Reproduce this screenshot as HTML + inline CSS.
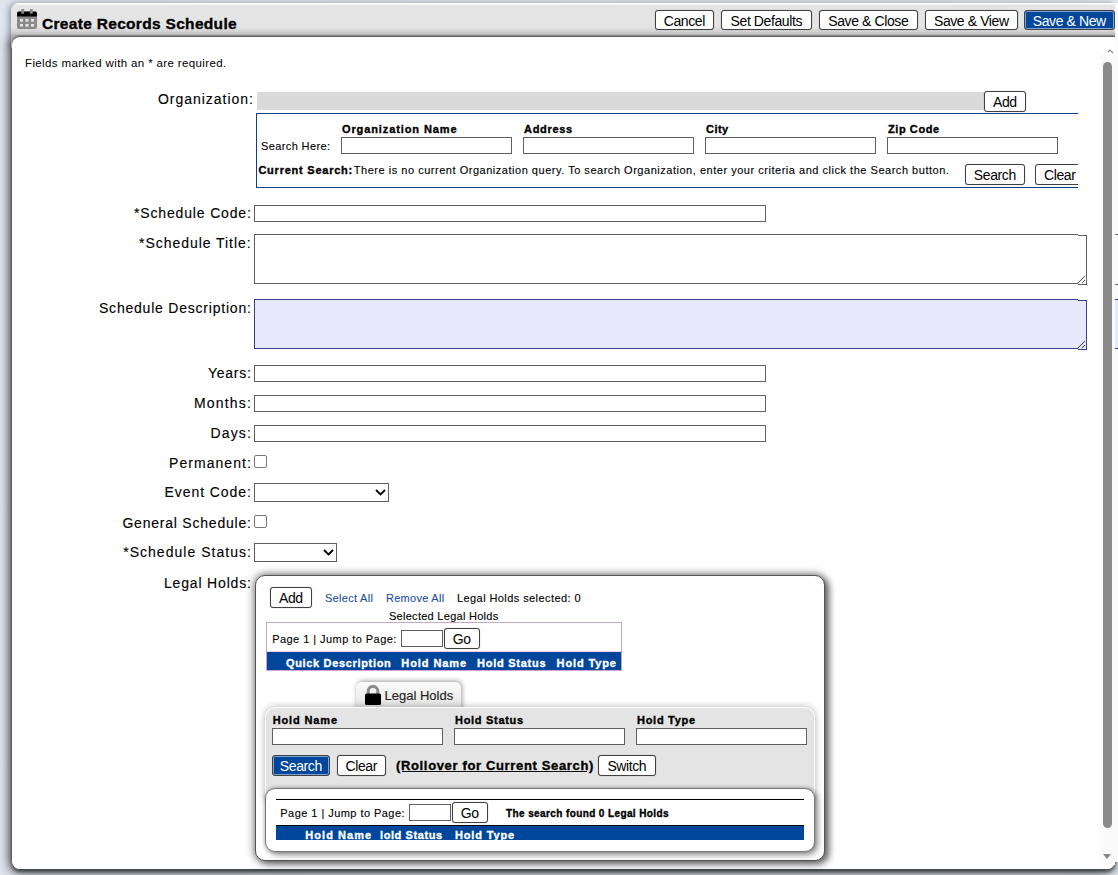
<!DOCTYPE html>
<html><head><meta charset="utf-8"><style>
html,body{margin:0;padding:0;width:1118px;height:875px;overflow:hidden}
body{background:linear-gradient(90deg,#dfe6ee,#e6ebf1);position:relative;font-family:"Liberation Sans",sans-serif}
.b{position:absolute}
.t{position:absolute;white-space:nowrap;line-height:normal;-webkit-text-stroke:0.12px currentColor;font-family:"Liberation Sans",sans-serif}
.btn{position:absolute;box-sizing:border-box;border:1px solid #404040;border-radius:3px;box-shadow:0 0 1px rgba(0,0,0,.45);letter-spacing:-0.4px;text-indent:-0.4px;text-align:center;font-family:"Liberation Sans",sans-serif;white-space:nowrap}
</style></head><body>
<div class="b" style="left:12px;top:36px;width:1103px;height:833px;z-index:-2;border-radius:8px 0 8px 8px;background:#fff;box-shadow:-1px 2px 11px 1px rgba(25,28,30,.95),0 3px 3px rgba(20,20,20,.4)"></div>
<div class="b" style="left:11px;top:3px;width:1104px;height:45px;z-index:-1;border-radius:8px 0 0 0;background:linear-gradient(#fff 0,#fff 1px,#e4e4e4 2px,#e4e4e4 24px,#d0d0d0 29px,#adadad 33px,#a8a8a8 45px);box-shadow:-2px 0 6px rgba(40,45,55,.45)"></div>
<svg class="b" style="left:17px;top:9px" width="20" height="20" viewBox="0 0 20 20">
<rect x="0" y="2.5" width="20" height="17.5" rx="2" fill="#8a8a8a"/>
<path d="M2 2.5h16a2 2 0 0 1 2 2V7.5H0V4.5a2 2 0 0 1 2-2z" fill="#000"/>
<rect x="4.3" y="0" width="2.8" height="4.7" fill="#8a8a8a"/><rect x="12.9" y="0" width="2.8" height="4.7" fill="#8a8a8a"/>
<g fill="#e6e6e6"><rect x="3" y="10" width="3" height="2.6"/><rect x="8.5" y="10" width="3" height="2.6"/><rect x="14" y="10" width="3" height="2.6"/>
<rect x="3" y="15" width="3" height="2.6"/><rect x="8.5" y="15" width="3" height="2.6"/><rect x="14" y="15" width="3" height="2.6"/></g>
</svg>
<div class="btn" style="left:655px;top:10px;width:59px;height:20px;background:#fff;color:#000;font-size:14px;line-height:18px;padding-top:1px">Cancel</div>
<div class="btn" style="left:721px;top:10px;width:91px;height:20px;background:#fff;color:#000;font-size:14px;line-height:18px;padding-top:1px">Set Defaults</div>
<div class="btn" style="left:819px;top:10px;width:99px;height:20px;background:#fff;color:#000;font-size:14px;line-height:18px;padding-top:1px">Save &amp; Close</div>
<div class="btn" style="left:925px;top:10px;width:93px;height:20px;background:#fff;color:#000;font-size:14px;line-height:18px;padding-top:1px">Save &amp; View</div>
<div class="btn" style="left:1024px;top:10px;width:91px;height:20px;background:#00479b;box-shadow:inset 0 0 0 1px #7fa6d2;color:#fff;font-size:14px;line-height:18px;padding-top:1px">Save &amp; New</div>
<div class="b" style="left:12px;top:36px;width:1103px;height:833px;background:#fff;border-radius:8px 0 8px 8px;border-top:1px solid #606060;box-sizing:border-box;box-shadow:0 -1px 1px rgba(0,0,0,.25)"></div>
<div class="b" style="left:257px;top:92px;width:727px;height:18px;background:#dadada"></div>
<div class="btn" style="left:984px;top:91px;width:42px;height:21px;background:#fff;color:#000;font-size:14px;line-height:19px;padding-top:1px">Add</div>
<div class="b" style="left:256px;top:113px;width:822px;height:75px;border:1px solid #0a3f8f;border-right:none;box-sizing:border-box"></div>
<div class="b" style="left:341px;top:137px;width:171px;height:17px;box-sizing:border-box;border:1px solid #5f5f5f;background:#fff"></div>
<div class="b" style="left:523px;top:137px;width:171px;height:17px;box-sizing:border-box;border:1px solid #5f5f5f;background:#fff"></div>
<div class="b" style="left:705px;top:137px;width:171px;height:17px;box-sizing:border-box;border:1px solid #5f5f5f;background:#fff"></div>
<div class="b" style="left:887px;top:137px;width:171px;height:17px;box-sizing:border-box;border:1px solid #5f5f5f;background:#fff"></div>
<div class="btn" style="left:965px;top:164px;width:60px;height:21px;background:#fff;color:#000;font-size:14px;line-height:19px;padding-top:1px">Search</div>
<div class="b" style="left:1035px;top:164px;width:43px;height:21px;overflow:hidden"><div class="btn" style="left:0px;top:0px;width:50px;height:21px;background:#fff;color:#000;font-size:14px;line-height:19px;padding-top:1px">Clear</div></div>
<div class="b" style="left:254px;top:205px;width:512px;height:17px;box-sizing:border-box;border:1px solid #5f5f5f;background:#fff"></div>
<div class="b" style="left:254px;top:234px;width:824px;height:50px;box-sizing:border-box;border:1px solid #5f5f5f;border-right:none;background:#fff"></div><div class="b" style="left:1078px;top:235px;width:9px;height:50px;box-sizing:border-box;border:1px solid #5f5f5f;border-left:none;background:#fff"></div><svg class="b" style="left:1077px;top:275px" width="9" height="9" viewBox="0 0 9 9"><path d="M1 8L8 1M5 8L8 5" stroke="#555" stroke-width="1.1" stroke-dasharray="1.1 0.4" fill="none"/></svg>
<div class="b" style="left:254px;top:299px;width:824px;height:50px;box-sizing:border-box;border:1px solid #3a3f8a;border-right:none;background:#e8e8fd"></div><div class="b" style="left:1078px;top:300px;width:9px;height:50px;box-sizing:border-box;border:1px solid #3a3f8a;border-left:none;background:#e8e8fd"></div><svg class="b" style="left:1077px;top:340px" width="9" height="9" viewBox="0 0 9 9"><path d="M1 8L8 1M5 8L8 5" stroke="#444" stroke-width="1.1" stroke-dasharray="1.1 0.4" fill="none"/></svg>
<div class="b" style="left:254px;top:365px;width:512px;height:17px;box-sizing:border-box;border:1px solid #5f5f5f;background:#fff"></div>
<div class="b" style="left:254px;top:395px;width:512px;height:17px;box-sizing:border-box;border:1px solid #5f5f5f;background:#fff"></div>
<div class="b" style="left:254px;top:425px;width:512px;height:17px;box-sizing:border-box;border:1px solid #5f5f5f;background:#fff"></div>
<div class="b" style="left:254px;top:455px;width:13px;height:13px;box-sizing:border-box;border:1px solid #777;border-radius:2px;background:#fff"></div>
<div class="b" style="left:254px;top:515px;width:13px;height:13px;box-sizing:border-box;border:1px solid #777;border-radius:2px;background:#fff"></div>
<div class="b" style="left:254px;top:483px;width:135px;height:19px;box-sizing:border-box;border:1px solid #5f5f5f;background:#fff"></div>
<div class="b" style="left:254px;top:543px;width:83px;height:19px;box-sizing:border-box;border:1px solid #5f5f5f;background:#fff"></div>
<svg class="b" style="left:375px;top:489px" width="11" height="7" viewBox="0 0 11 7"><path d="M1 1l4.5 4.5L10 1" stroke="#000" stroke-width="1.8" fill="none"/></svg>
<svg class="b" style="left:323px;top:549px" width="11" height="7" viewBox="0 0 11 7"><path d="M1 1l4.5 4.5L10 1" stroke="#000" stroke-width="1.8" fill="none"/></svg>
<div class="b" style="left:1115px;top:3px;width:3px;height:859px;background:#fbfbfb"></div>
<div class="b" style="left:1100px;top:53px;width:15px;height:812px;background:#fafafa"></div>
<div class="b" style="left:1103px;top:62px;width:9px;height:766px;background:#8a8a8a;border-radius:4.5px"></div>
<svg class="b" style="left:1106px;top:48px" width="8" height="6" viewBox="0 0 8 6"><path d="M2 4L4 2l3 3" stroke="#888" stroke-width="1.1" fill="none"/></svg>
<svg class="b" style="left:1102px;top:854px" width="10" height="6" viewBox="0 0 10 6"><path d="M1 0h8L5 5z" fill="#888"/></svg>
<div class="b" style="left:1115px;top:234px;width:3px;height:1px;background:#666"></div>
<div class="b" style="left:1115px;top:284px;width:3px;height:1px;background:#666"></div>
<div class="b" style="left:1115px;top:299px;width:3px;height:50px;background:#e8e8fd;border-top:1px solid #3a3f8a;border-bottom:1px solid #3a3f8a;box-sizing:border-box"></div>
<div class="b" style="left:255px;top:575px;width:570px;height:286px;background:#fff;border:1px solid #555;box-sizing:border-box;border-radius:10px;box-shadow:0 0 8px 1px rgba(0,0,0,.5),4px 3px 7px rgba(0,0,0,.45)"></div>
<div class="btn" style="left:270px;top:587px;width:42px;height:21px;background:#fff;color:#000;font-size:14px;line-height:19px;padding-top:1px">Add</div>
<div class="b" style="left:266px;top:622px;width:356px;height:49px;box-sizing:border-box;border:1px solid #c8a6cf"></div>
<div class="b" style="left:267px;top:651px;width:354px;height:1px;background:#e3d3e6"></div>
<div class="b" style="left:401px;top:630px;width:42px;height:17px;box-sizing:border-box;border:1px solid #5f5f5f;background:#fff"></div>
<div class="btn" style="left:444px;top:628px;width:36px;height:21px;background:#fff;color:#000;font-size:14px;line-height:19px;padding-top:1px">Go</div>
<div class="b" style="left:267px;top:652px;width:354px;height:18px;background:#00479b"></div>
<div class="b" style="left:356px;top:682px;width:105px;height:30px;background:linear-gradient(#fafafa,#e6e6e6 80%);border-radius:6px 6px 0 0;box-shadow:1px -1px 5px rgba(0,0,0,.4)"></div>
<svg class="b" style="left:364px;top:685px" width="18" height="20" viewBox="0 0 18 20">
<path d="M4.2 9V6.2a4.8 4.8 0 0 1 9.6 0V9" stroke="#8c8c8c" stroke-width="3" fill="none"/>
<rect x="1" y="8.5" width="16" height="11.5" rx="1.5" fill="#000"/></svg>
<div class="b" style="left:265px;top:707px;width:550px;height:93px;box-sizing:border-box;border:1px solid #fff;border-bottom:none;background:#e4e4e4;border-radius:10px 10px 0 0;box-shadow:0 0 7px rgba(0,0,0,.32)"></div>
<div class="b" style="left:272px;top:728px;width:171px;height:17px;box-sizing:border-box;border:1px solid #5f5f5f;background:#fff"></div>
<div class="b" style="left:454px;top:728px;width:171px;height:17px;box-sizing:border-box;border:1px solid #5f5f5f;background:#fff"></div>
<div class="b" style="left:636px;top:728px;width:171px;height:17px;box-sizing:border-box;border:1px solid #5f5f5f;background:#fff"></div>
<div class="btn" style="left:272px;top:755px;width:58px;height:21px;background:#00479b;box-shadow:inset 0 0 0 1px #7fa6d2;color:#fff;font-size:14px;line-height:19px;padding-top:1px">Search</div>
<div class="btn" style="left:337px;top:755px;width:49px;height:21px;background:#fff;color:#000;font-size:14px;line-height:19px;padding-top:1px">Clear</div>
<div class="btn" style="left:598px;top:755px;width:58px;height:21px;background:#fff;color:#000;font-size:14px;line-height:19px;padding-top:1px">Switch</div>
<div class="b" style="left:402px;top:771px;width:185px;height:1px;background:#111"></div>
<div class="b" style="left:265px;top:788px;width:550px;height:64px;background:#fff;border:1px solid #7a7a7a;box-sizing:border-box;border-radius:10px;box-shadow:0 0 4px rgba(0,0,0,.3),3px 3px 6px rgba(0,0,0,.4)"></div>
<div class="b" style="left:276px;top:799px;width:528px;height:1px;background:#000"></div>
<div class="b" style="left:409px;top:804px;width:42px;height:17px;box-sizing:border-box;border:1px solid #5f5f5f;background:#fff"></div>
<div class="btn" style="left:452px;top:802px;width:36px;height:21px;background:#fff;color:#000;font-size:14px;line-height:19px;padding-top:1px">Go</div>
<div class="b" style="left:276px;top:825px;width:528px;height:1px;background:#000"></div>
<div class="b" style="left:276px;top:826px;width:528px;height:14px;background:#00479b"></div>
<div class="t" style="left:42.00px;top:14.50px;font-size:15.5px;font-weight:bold;letter-spacing:0.310px;color:#000;-webkit-text-stroke:0.35px currentColor;">Create Records Schedule</div>
<div class="t" style="left:25.00px;top:57.00px;font-size:11.5px;font-weight:normal;letter-spacing:0.369px;color:#000;-webkit-text-stroke:0">Fields marked with an * are required.</div>
<div class="t" style="left:158.00px;top:91.00px;font-size:14px;font-weight:normal;letter-spacing:0.968px;color:#000;">Organization:</div>
<div class="t" style="left:134.00px;top:205.00px;font-size:14px;font-weight:normal;letter-spacing:0.844px;color:#000;">*Schedule Code:</div>
<div class="t" style="left:139.00px;top:235.00px;font-size:14px;font-weight:normal;letter-spacing:0.957px;color:#000;">*Schedule Title:</div>
<div class="t" style="left:99.00px;top:299.50px;font-size:14px;font-weight:normal;letter-spacing:0.785px;color:#000;">Schedule Description:</div>
<div class="t" style="left:208.00px;top:365.00px;font-size:14px;font-weight:normal;letter-spacing:0.743px;color:#000;">Years:</div>
<div class="t" style="left:194.00px;top:395.00px;font-size:14px;font-weight:normal;letter-spacing:1.182px;color:#000;">Months:</div>
<div class="t" style="left:210.50px;top:425.00px;font-size:14px;font-weight:normal;letter-spacing:1.151px;color:#000;">Days:</div>
<div class="t" style="left:169.00px;top:454.50px;font-size:14px;font-weight:normal;letter-spacing:1.058px;color:#000;">Permanent:</div>
<div class="t" style="left:164.60px;top:484.00px;font-size:14px;font-weight:normal;letter-spacing:0.924px;color:#000;">Event Code:</div>
<div class="t" style="left:122.40px;top:514.50px;font-size:14px;font-weight:normal;letter-spacing:0.783px;color:#000;">General Schedule:</div>
<div class="t" style="left:123.20px;top:544.00px;font-size:14px;font-weight:normal;letter-spacing:1.025px;color:#000;">*Schedule Status:</div>
<div class="t" style="left:164.00px;top:575.00px;font-size:14px;font-weight:normal;letter-spacing:0.824px;color:#000;">Legal Holds:</div>
<div class="t" style="left:342.00px;top:122.50px;font-size:11px;font-weight:bold;letter-spacing:0.892px;color:#000;-webkit-text-stroke:0.35px currentColor;">Organization Name</div>
<div class="t" style="left:524.00px;top:122.50px;font-size:11px;font-weight:bold;letter-spacing:0.684px;color:#000;-webkit-text-stroke:0.35px currentColor;">Address</div>
<div class="t" style="left:706.00px;top:122.50px;font-size:11px;font-weight:bold;letter-spacing:0.446px;color:#000;-webkit-text-stroke:0.35px currentColor;">City</div>
<div class="t" style="left:888.00px;top:122.50px;font-size:11px;font-weight:bold;letter-spacing:0.581px;color:#000;-webkit-text-stroke:0.35px currentColor;">Zip Code</div>
<div class="t" style="left:261.00px;top:140.00px;font-size:11px;font-weight:normal;letter-spacing:0.386px;color:#000;">Search Here:</div>
<div class="t" style="left:258.40px;top:164.00px;font-size:11px;font-weight:bold;letter-spacing:0.766px;color:#000;-webkit-text-stroke:0.35px currentColor;">Current Search:</div>
<div class="t" style="left:353.80px;top:164.00px;font-size:11px;font-weight:normal;letter-spacing:0.523px;color:#000;">There is no current Organization query. To search Organization, enter your criteria and click the Search button.</div>
<div class="t" style="left:325.00px;top:592.00px;font-size:11px;font-weight:normal;letter-spacing:0.288px;color:#1f4f9f;">Select All</div>
<div class="t" style="left:386.00px;top:592.00px;font-size:11px;font-weight:normal;letter-spacing:0.278px;color:#1f4f9f;">Remove All</div>
<div class="t" style="left:457.00px;top:592.00px;font-size:11px;font-weight:normal;letter-spacing:0.417px;color:#000;">Legal Holds selected: 0</div>
<div class="t" style="left:389.00px;top:609.50px;font-size:11px;font-weight:normal;letter-spacing:0.276px;color:#000;">Selected Legal Holds</div>
<div class="t" style="left:272.20px;top:633.00px;font-size:11px;font-weight:normal;letter-spacing:0.447px;color:#000;">Page 1 | Jump to Page:</div>
<div class="t" style="left:286.00px;top:656.50px;font-size:11px;font-weight:bold;letter-spacing:0.662px;color:#fff;-webkit-text-stroke:0.35px currentColor;">Quick Description</div>
<div class="t" style="left:401.30px;top:656.50px;font-size:11px;font-weight:bold;letter-spacing:0.920px;color:#fff;-webkit-text-stroke:0.35px currentColor;">Hold Name</div>
<div class="t" style="left:477.00px;top:656.50px;font-size:11px;font-weight:bold;letter-spacing:0.751px;color:#fff;-webkit-text-stroke:0.35px currentColor;">Hold Status</div>
<div class="t" style="left:556.60px;top:656.50px;font-size:11px;font-weight:bold;letter-spacing:0.871px;color:#fff;-webkit-text-stroke:0.35px currentColor;">Hold Type</div>
<div class="t" style="left:384.50px;top:688.00px;font-size:13px;font-weight:normal;letter-spacing:0.004px;color:#222;">Legal Holds</div>
<div class="t" style="left:272.70px;top:713.50px;font-size:11px;font-weight:bold;letter-spacing:0.870px;color:#000;-webkit-text-stroke:0.35px currentColor;">Hold Name</div>
<div class="t" style="left:455.00px;top:713.50px;font-size:11px;font-weight:bold;letter-spacing:0.701px;color:#000;-webkit-text-stroke:0.35px currentColor;">Hold Status</div>
<div class="t" style="left:637.00px;top:713.50px;font-size:11px;font-weight:bold;letter-spacing:0.721px;color:#000;-webkit-text-stroke:0.35px currentColor;">Hold Type</div>
<div class="t" style="left:396.00px;top:757.60px;font-size:13px;font-weight:bold;letter-spacing:0.649px;color:#000;-webkit-text-stroke:0.35px currentColor;">(Rollover for Current Search)</div>
<div class="t" style="left:280.30px;top:807.00px;font-size:11px;font-weight:normal;letter-spacing:0.452px;color:#000;">Page 1 | Jump to Page:</div>
<div class="t" style="left:506.00px;top:808.00px;font-size:10px;font-weight:bold;letter-spacing:0.394px;color:#000;-webkit-text-stroke:0.35px currentColor;">The search found 0 Legal Holds</div>
<div class="t" style="left:305.30px;top:829.00px;font-size:11px;font-weight:bold;letter-spacing:1.045px;color:#fff;-webkit-text-stroke:0.35px currentColor;">Hold Name</div>
<div class="t" style="left:380.00px;top:829.00px;font-size:11px;font-weight:bold;letter-spacing:0.589px;color:#fff;-webkit-text-stroke:0.35px currentColor;">lold Status</div>
<div class="t" style="left:455.00px;top:829.00px;font-size:11px;font-weight:bold;letter-spacing:0.846px;color:#fff;-webkit-text-stroke:0.35px currentColor;">Hold Type</div>
</body></html>
